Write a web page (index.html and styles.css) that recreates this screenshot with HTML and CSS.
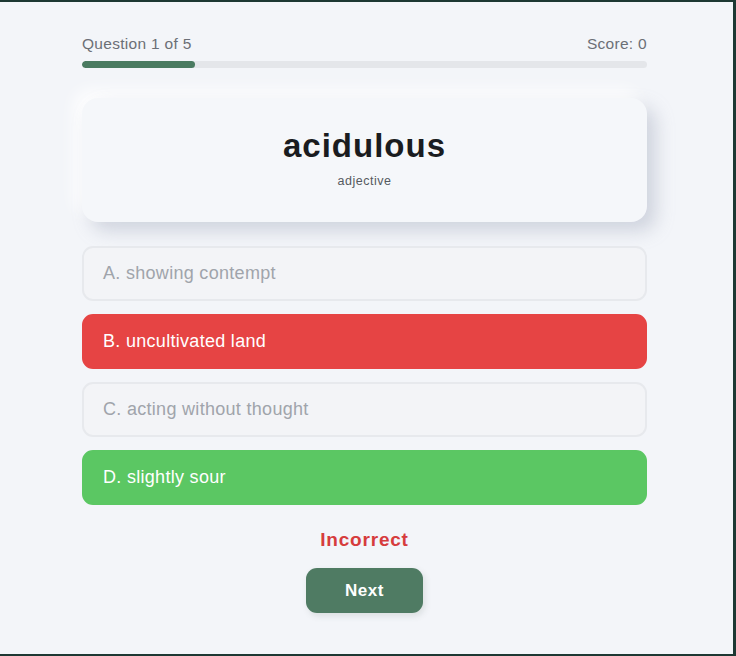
FILE: index.html
```
<!DOCTYPE html>
<html lang="en">
<head>
<meta charset="utf-8">
<title>Vocabulary Quiz</title>
<link rel="stylesheet" href="styles.css">
</head>
<body>
<div class="frame">
  <main class="quiz">
    <header class="quiz-head">
      <div class="meta">
        <span class="meta-text">Question 1 of 5</span>
        <span class="meta-text">Score: 0</span>
      </div>
      <div class="track"><div class="fill" style="width:20%"></div></div>
    </header>
    <section class="card">
      <h1 class="word">acidulous</h1>
      <p class="pos">adjective</p>
    </section>
    <div class="options">
      <div class="option muted">A. showing contempt</div>
      <div class="option wrong">B. uncultivated land</div>
      <div class="option muted">C. acting without thought</div>
      <div class="option right">D. slightly sour</div>
    </div>
    <p class="feedback">Incorrect</p>
    <div class="actions"><button class="next">Next</button></div>
  </main>
</div>
</body>
</html>
```
FILE: styles.css
```
html, body {
  margin: 0;
  padding: 0;
}
body {
  background: #f3f5f9;
  font-family: "Liberation Sans", Arial, sans-serif;
}
.frame {
  box-sizing: border-box;
  height: 656px;
  border-top: 2px solid #1d3833;
  border-right: 3px solid #1d3833;
  border-bottom: 2px solid #1d3833;
  background: #f3f5f9;
  overflow: hidden;
}
.quiz {
  width: 565px;
  margin-left: 82px;
  display: flex;
  flex-direction: column;
}
.quiz-head {
  padding-top: 33px;
}
.meta {
  display: flex;
  justify-content: space-between;
}
.meta-text {
  font-size: 15.5px;
  line-height: 18px;
  letter-spacing: 0.3px;
  color: #6b6f76;
}
.track {
  margin-top: 8px;
  height: 7px;
  border-radius: 4px;
  background: #e4e6ea;
  overflow: hidden;
}
.fill {
  height: 100%;
  border-radius: 4px;
  background: #4a7b61;
}
.card {
  margin-top: 30px;
  height: 124px;
  box-sizing: border-box;
  padding-top: 28px;
  border-radius: 16px;
  background: #f5f7fa;
  box-shadow: 9px 9px 18px rgba(150, 158, 178, 0.38), -8px -8px 16px rgba(255, 255, 255, 0.9);
  text-align: center;
}
.word {
  margin: 0;
  font-size: 33px;
  line-height: 40px;
  font-weight: 700;
  letter-spacing: 1px;
  color: #1a1c20;
}
.pos {
  margin: 8px 0 0;
  font-size: 12.5px;
  line-height: 14px;
  letter-spacing: 0.5px;
  color: #555a60;
}
.options {
  margin-top: 24px;
  display: flex;
  flex-direction: column;
  gap: 13px;
}
.option {
  box-sizing: border-box;
  height: 55px;
  display: flex;
  align-items: center;
  padding: 0 19px;
  border: 2px solid transparent;
  border-radius: 11px;
  font-size: 18px;
  letter-spacing: 0.3px;
}
.option.muted {
  background: #f3f4f7;
  border-color: #e7e9ed;
  color: #a0a4ab;
}
.option.wrong {
  background: #e64444;
  border-color: #e64444;
  color: #ffffff;
}
.option.right {
  background: #5bc763;
  border-color: #5bc763;
  color: #ffffff;
}
.feedback {
  margin: 24px 0 0;
  text-align: center;
  font-size: 19px;
  line-height: 22px;
  font-weight: 700;
  letter-spacing: 0.8px;
  color: #d63c3d;
}
.actions {
  margin-top: 17px;
  display: flex;
  justify-content: center;
}
.next {
  width: 117px;
  height: 45px;
  border: none;
  border-radius: 11px;
  background: #4f7b63;
  color: #ffffff;
  font-family: "Liberation Sans", Arial, sans-serif;
  font-size: 17px;
  font-weight: 700;
  letter-spacing: 0.6px;
  box-shadow: 2px 3px 6px rgba(80, 100, 90, 0.15);
}
```
